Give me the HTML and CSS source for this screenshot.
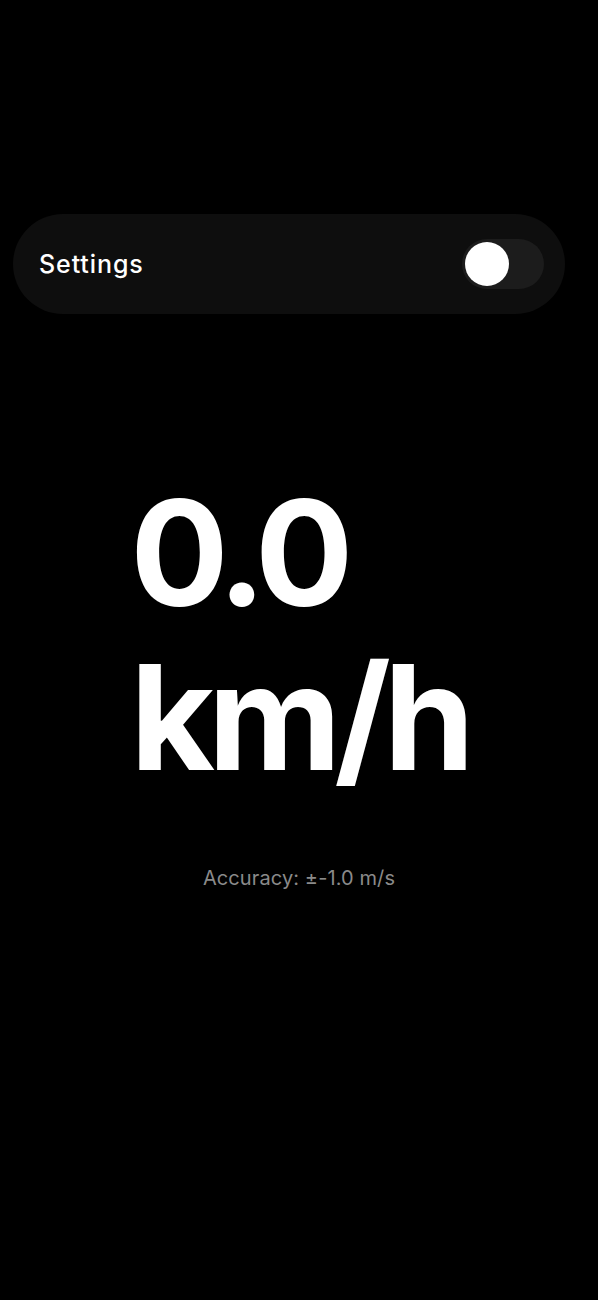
FILE: index.html
```html
<!DOCTYPE html>
<html>
<head>
<meta charset="utf-8">
<link rel="stylesheet" href="styles.css">
</head>
<body>
<div class="screen">
  <div class="settings-card">
    <span class="settings-label">Settings</span>
    <div class="toggle"><div class="knob"></div></div>
  </div>
  <div class="speed-wrap">
    <div class="speed">
      <div class="speed-line">0.0</div>
      <div class="speed-line">km/h</div>
    </div>
  </div>
  <div class="accuracy">Accuracy: ±-1.0 m/s</div>
</div>
</body>
</html>
```

FILE: styles.css
```css
html, body {
  margin: 0;
  padding: 0;
  background: #000;
}
.screen {
  width: 598px;
  height: 1300px;
  background: #000;
  padding-top: 214px;
  box-sizing: border-box;
  font-family: "Inter", "Roboto", sans-serif;
}
.settings-card {
  margin: 0 33px 0 13px;
  height: 100px;
  border-radius: 50px;
  background: #0e0e0e;
  display: flex;
  align-items: center;
  justify-content: space-between;
  padding: 0 21px 0 26px;
  box-sizing: border-box;
}
.settings-label {
  color: #fff;
  font-size: 25px;
  font-weight: 500;
  letter-spacing: 0.9px;
}
.toggle {
  width: 82px;
  height: 50px;
  border-radius: 25px;
  background: #1c1c1c;
  display: flex;
  align-items: center;
  padding-left: 3px;
  box-sizing: border-box;
}
.knob {
  width: 44px;
  height: 44px;
  border-radius: 50%;
  background: #fff;
}
.speed-wrap {
  display: flex;
  justify-content: center;
  margin-top: 157px;
}
.speed {
  color: #fff;
  font-size: 146px;
  font-weight: 700;
  line-height: 164px;
  letter-spacing: -7px;
}
.accuracy {
  margin-top: 67px;
  text-align: center;
  color: #8a8a8a;
  font-size: 20px;
  letter-spacing: 0.1px;
}
```
